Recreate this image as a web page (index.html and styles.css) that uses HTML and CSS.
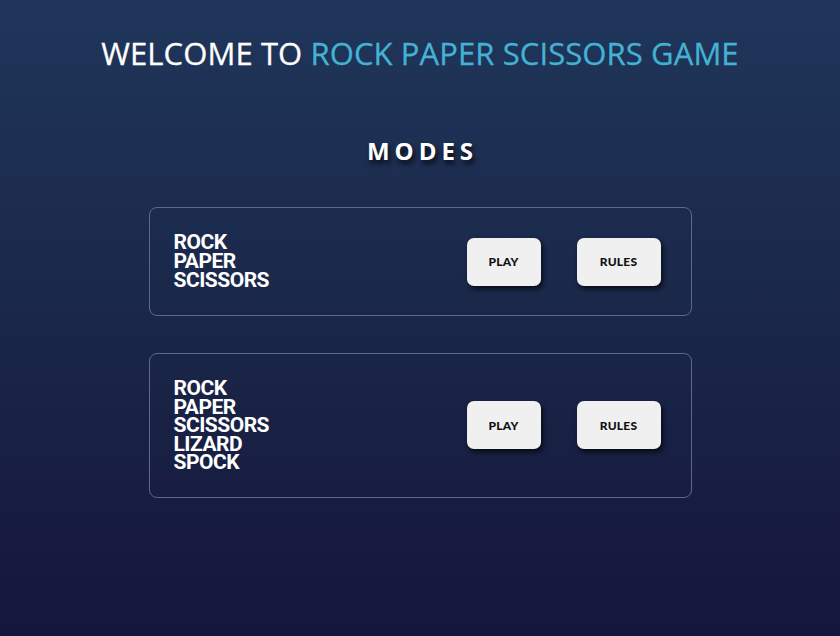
FILE: index.html
```html
<!DOCTYPE html>
<html lang="en">
<head>
<meta charset="utf-8">
<title>Rock Paper Scissors</title>
<link rel="stylesheet" href="styles.css">
</head>
<body>
<main class="page">
  <h1 class="title">WELCOME TO <span class="accent">ROCK PAPER SCISSORS GAME</span></h1>
  <h2 class="modes">MODES</h2>
  <section class="cards">
    <div class="card">
      <div class="card-name">ROCK<br>PAPER<br>SCISSORS</div>
      <div class="actions">
        <button class="btn btn-play">PLAY</button>
        <button class="btn btn-rules">RULES</button>
      </div>
    </div>
    <div class="card">
      <div class="card-name card-name-long">ROCK<br>PAPER<br>SCISSORS<br>LIZARD<br>SPOCK</div>
      <div class="actions">
        <button class="btn btn-play">PLAY</button>
        <button class="btn btn-rules">RULES</button>
      </div>
    </div>
  </section>
</main>
</body>
</html>
```
FILE: styles.css
```css
html, body {
  margin: 0;
  padding: 0;
}
body {
  min-height: 100vh;
  background: linear-gradient(180deg, #1f365a 0%, #1a2749 50%, #15163b 100%);
  color: #ffffff;
  font-family: "Open Sans", sans-serif;
}
.page {
  display: flex;
  flex-direction: column;
  align-items: center;
  padding-top: 33px;
}
.title {
  margin: 0;
  font-family: "Comic Sans MS", "Open Sans", sans-serif;
  font-weight: 400;
  font-size: 31px;
  line-height: 40px;
  letter-spacing: 0.1px;
  color: #ffffff;
  text-align: center;
  -webkit-text-stroke: 0.3px currentColor;
}
.accent {
  color: #44b2d3;
}
.modes {
  margin: 63px 0 0 0;
  font-family: "Comic Sans MS", "Open Sans", sans-serif;
  font-weight: 700;
  font-size: 24px;
  line-height: 30px;
  letter-spacing: 5px;
  padding-left: 5px;
  text-shadow: 2px 4px 5px rgba(0, 0, 0, 0.75);
}
.cards {
  margin-top: 41px;
  width: 543px;
  display: flex;
  flex-direction: column;
  gap: 37px;
}
.card {
  display: flex;
  align-items: center;
  justify-content: space-between;
  padding: 25px 30px 25px 24px;
  border: 1px solid #5b6a8c;
  border-radius: 8px;
  box-sizing: border-box;
}
.card-name {
  font-family: "Roboto", sans-serif;
  font-weight: 700;
  font-size: 21px;
  line-height: 19px;
  letter-spacing: -0.5px;
  color: #ffffff;
}
.card-name-long {
  line-height: 18.5px;
}
.actions {
  display: flex;
  gap: 36px;
}
.btn {
  height: 48px;
  padding: 0;
  border: none;
  border-radius: 7px;
  background: #f0f0f0;
  color: #111111;
  font-family: "Lato", sans-serif;
  font-weight: 900;
  font-size: 12px;
  letter-spacing: 0.2px;
  box-shadow: 2px 3px 5px rgba(0, 0, 0, 0.7);
  cursor: pointer;
}
.btn-play {
  width: 74px;
}
.btn-rules {
  width: 84px;
}
```
